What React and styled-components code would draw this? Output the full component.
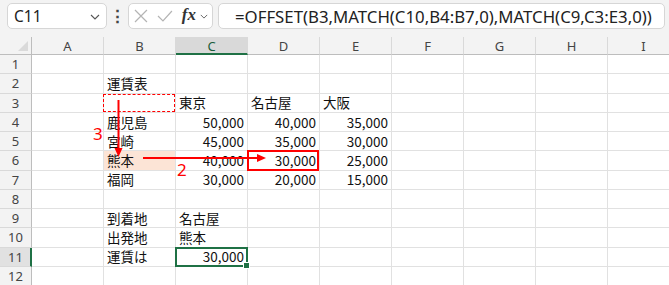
import React from "react"
import styled, { createGlobalStyle, css } from "styled-components"

const GlobalStyle = createGlobalStyle`
  html, body {
    margin: 0;
    padding: 0;
    background: #ffffff;
    overflow: hidden;
  }
`

const GREEN = "#1f7145"
const RED = "#ff0000"
const GRID = "#e1e1e1"

const COLS = ["A", "B", "C", "D", "E", "F", "G", "H", "I"]

const cells = {
  "B2": "運賃表",
  "C3": "東京",
  "D3": "名古屋",
  "E3": "大阪",
  "B4": "鹿児島",
  "C4": "50,000",
  "D4": "40,000",
  "E4": "35,000",
  "B5": "宮崎",
  "C5": "45,000",
  "D5": "35,000",
  "E5": "30,000",
  "B6": "熊本",
  "C6": "40,000",
  "D6": "30,000",
  "E6": "25,000",
  "B7": "福岡",
  "C7": "30,000",
  "D7": "20,000",
  "E7": "15,000",
  "B9": "到着地",
  "C9": "名古屋",
  "B10": "出発地",
  "C10": "熊本",
  "B11": "運賃は",
  "C11": "30,000",
}

const marks = {
  B3: "dashed",
  D6: "red",
  C11: "select",
}

export default function App() {
  const rows = Array.from({ length: 12 }, (_, i) => i + 1)
  return (
    <Page>
      <GlobalStyle />
      <Toolbar>
        <NameBox>
          <span>C11</span>
          <Chevron />
        </NameBox>
        <Dots>⋮</Dots>
        <FxBox>
          <svg width="14" height="14" viewBox="0 0 14 14">
            <path d="M1 1 L13 13 M13 1 L1 13" stroke="#b4b4b4" strokeWidth="1.2" fill="none" />
          </svg>
          <svg width="16" height="14" viewBox="0 0 16 14">
            <path d="M1 7 L6 12 L15 2" stroke="#b4b4b4" strokeWidth="1.2" fill="none" />
          </svg>
          <FxText>fx</FxText>
          <Chevron small />
        </FxBox>
        <FormulaBox>=OFFSET(B3,MATCH(C10,B4:B7,0),MATCH(C9,C3:E3,0))</FormulaBox>
      </Toolbar>

      <Sheet>
        <Corner />
        {COLS.map(c => (
          <ColHead key={c} active={c === "C"}>{c}</ColHead>
        ))}
        {rows.map(r => (
          <React.Fragment key={r}>
            <RowHead active={r === 11}>{r}</RowHead>
            {COLS.map(c => {
              const id = c + r
              const value = cells[id]
              const numeric = value && /^[\d,]+$/.test(value)
              return (
                <Cell
                  key={id}
                  numeric={numeric}
                  fill={id === "B6" ? "#fce4d6" : undefined}
                  mark={marks[id]}
                >
                  {value}
                </Cell>
              )
            })}
          </React.Fragment>
        ))}

        <Arrows width="669" height="250" viewBox="0 0 669 250">
          <line x1="118.5" y1="63" x2="118.5" y2="112" stroke={RED} strokeWidth="2" />
          <polygon points="114.5,111 122.5,111 118.5,120" fill={RED} />
          <line x1="143" y1="121" x2="258" y2="121" stroke={RED} strokeWidth="2" />
          <polygon points="257,117 257,125 266,121" fill={RED} />
        </Arrows>
        <Label style={{ left: 93, top: 87 }}>3</Label>
        <Label style={{ left: 177, top: 123 }}>2</Label>
      </Sheet>
    </Page>
  )
}

function Chevron({ small }) {
  return (
    <ChevronSvg small={small} viewBox="0 0 10 6">
      <path d="M1 1 L5 5 L9 1" stroke="#555" strokeWidth="1.1" fill="none" />
    </ChevronSvg>
  )
}

const Page = styled.div`
  width: 669px;
  height: 285px;
  overflow: hidden;
  display: flex;
  flex-direction: column;
  background: #f3f3f3;
  font-family: "Noto Sans", "Segoe UI", sans-serif;
`

const Toolbar = styled.div`
  height: 37px;
  box-sizing: border-box;
  padding: 3px 4px 0 7px;
  display: flex;
  align-items: flex-start;
  flex-shrink: 0;
`

const boxBase = css`
  height: 26px;
  box-sizing: border-box;
  background: #ffffff;
  border: 1px solid #d6d6d6;
  border-radius: 5px;
  display: flex;
  align-items: center;
`

const NameBox = styled.div`
  ${boxBase};
  width: 100px;
  padding: 0 6px 0 6px;
  justify-content: space-between;
  font-size: 15.5px;
  color: #222;
  span {
    margin-top: -1px;
  }
`

const ChevronSvg = styled.svg`
  width: ${p => (p.small ? "8px" : "10px")};
  height: ${p => (p.small ? "5px" : "6px")};
  margin-top: 1px;
`

const Dots = styled.div`
  width: 21px;
  text-align: center;
  font-size: 17px;
  line-height: 26px;
  color: #444;
  font-weight: bold;
`

const FxBox = styled.div`
  ${boxBase};
  width: 85px;
  padding: 0 4px 0 5px;
  gap: 9px;
`

const FxText = styled.span`
  font-family: "Liberation Serif", "DejaVu Serif", serif;
  font-style: italic;
  font-weight: bold;
  font-size: 17px;
  color: #333;
  margin-right: -5px;
  margin-top: -2px;
`

const FormulaBox = styled.div`
  ${boxBase};
  margin-left: 5px;
  width: 447px;
  padding-left: 16px;
  font-size: 16.8px;
  color: #222;
  white-space: nowrap;
  overflow: hidden;
`

const Sheet = styled.div`
  position: relative;
  flex: 1;
  display: grid;
  grid-template-columns: 32px repeat(9, 72px);
  grid-template-rows: 18px repeat(12, 19.25px);
  background: #ffffff;
  overflow: hidden;
`

const headBase = css`
  background: #f3f3f3;
  color: #444;
  font-family: "Noto Sans", "Segoe UI", sans-serif;
  font-size: 13px;
  display: flex;
  align-items: center;
  justify-content: center;
  box-sizing: border-box;
`

const Corner = styled.div`
  ${headBase};
  border-right: 1px solid #bdbdbd;
  border-bottom: 1px solid #bdbdbd;
  position: relative;
  &::after {
    content: "";
    position: absolute;
    right: 3px;
    bottom: 3px;
    border-left: 10px solid transparent;
    border-bottom: 10px solid #dadada;
  }
`

const ColHead = styled.div`
  ${headBase};
  border-right: 1px solid #d9d9d9;
  border-bottom: ${p => (p.active ? `2px solid ${GREEN}` : "1px solid #bdbdbd")};
  background: ${p => (p.active ? "#d9d9d9" : "#f3f3f3")};
  color: ${p => (p.active ? "#1a5c3a" : "#444")};
  padding-top: ${p => (p.active ? "1px" : "0")};
`

const RowHead = styled.div`
  ${headBase};
  border-bottom: 1px solid #d9d9d9;
  border-right: ${p => (p.active ? `2px solid ${GREEN}` : "1px solid #bdbdbd")};
  background: ${p => (p.active ? "#e1e1e1" : "#f3f3f3")};
  padding-left: ${p => (p.active ? "1px" : "0")};
  color: #444;
`

const markStyles = {
  dashed: css`
    &::after {
      content: "";
      position: absolute;
      inset: 0 0 0 -1px;
      border: 1px dashed ${RED};
    }
  `,
  red: css`
    &::after {
      content: "";
      position: absolute;
      inset: -1px 0 -1px -1px;
      border: 2px solid ${RED};
      z-index: 2;
    }
  `,
  select: css`
    &::after {
      content: "";
      position: absolute;
      inset: -1px -1px -1px -1px;
      border: 2px solid ${GREEN};
      z-index: 2;
    }
    &::before {
      content: "";
      position: absolute;
      right: -3px;
      bottom: -3px;
      width: 5px;
      height: 5px;
      background: ${GREEN};
      border: 1px solid #fff;
      z-index: 3;
    }
  `,
}

const Cell = styled.div`
  position: relative;
  box-sizing: border-box;
  border-right: 1px solid ${GRID};
  border-bottom: 1px solid ${GRID};
  background: ${p => p.fill || "#ffffff"};
  font-family: "Noto Sans CJK JP", "Noto Sans", sans-serif;
  font-size: 13.5px;
  color: #111;
  display: flex;
  align-items: center;
  justify-content: ${p => (p.numeric ? "flex-end" : "flex-start")};
  padding: 1px 3px 0 3px;
  white-space: nowrap;
  line-height: 1;
  ${p => p.mark && markStyles[p.mark]};
`

const Arrows = styled.svg`
  position: absolute;
  left: 0;
  top: 0;
  pointer-events: none;
  z-index: 4;
`

const Label = styled.span`
  position: absolute;
  color: ${RED};
  font-family: "Noto Sans", "Segoe UI", sans-serif;
  font-size: 17px;
  line-height: 20px;
  z-index: 4;
`
